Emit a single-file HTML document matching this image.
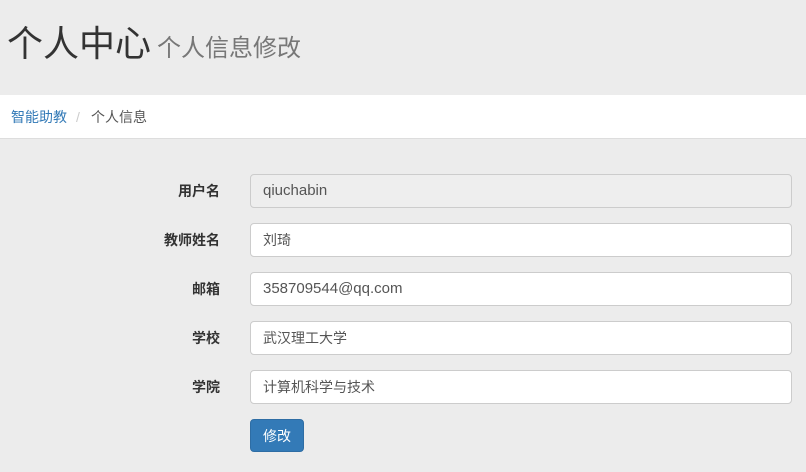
<!DOCTYPE html>
<html><head><meta charset="utf-8"><style>
body{margin:0;background:#ececec;font-family:"Liberation Sans","Noto Sans CJK SC",sans-serif;font-size:14px;color:#333;width:806px;height:472px;overflow:hidden;position:relative}
.h{position:absolute;left:7px;top:22px;font-size:36px;line-height:44px;color:#333}
.h small{font-size:24px;color:#777;margin-left:6px}
.bc{position:absolute;left:0;top:95px;width:806px;height:43px;background:#fff;border-bottom:1px solid #ddd}
.bc span{position:absolute;top:12px;line-height:20px}
.lab{position:absolute;right:586px;font-weight:bold;line-height:20px}
.in{position:absolute;left:250px;width:528px;height:32px;border:1px solid #ccc;border-radius:4px;background:#fff;padding-left:12px;line-height:32px;font-size:14px;color:#555}
.btn{position:absolute;left:250px;top:419px;width:54px;height:33px;background:#337ab7;border:1px solid #2e6da4;border-radius:4px;color:#fff;text-align:center;line-height:32px;box-sizing:border-box}
</style></head><body>
<div class="h">个人中心<small>个人信息修改</small></div>
<div class="bc"><span style="left:11px;color:#337ab7">智能助教</span><span style="left:76px;color:#ccc">/</span><span style="left:91px;color:#555">个人信息</span></div>
<div class="lab" style="top:181px">用户名</div><div class="in" style="top:174px;background:#eee;font-size:15px">qiuchabin</div>
<div class="lab" style="top:230px">教师姓名</div><div class="in" style="top:223px">刘琦</div>
<div class="lab" style="top:279px">邮箱</div><div class="in" style="top:272px;font-size:15px">358709544@qq.com</div>
<div class="lab" style="top:328px">学校</div><div class="in" style="top:321px">武汉理工大学</div>
<div class="lab" style="top:377px">学院</div><div class="in" style="top:370px">计算机科学与技术</div>
<div class="btn">修改</div>
</body></html>
